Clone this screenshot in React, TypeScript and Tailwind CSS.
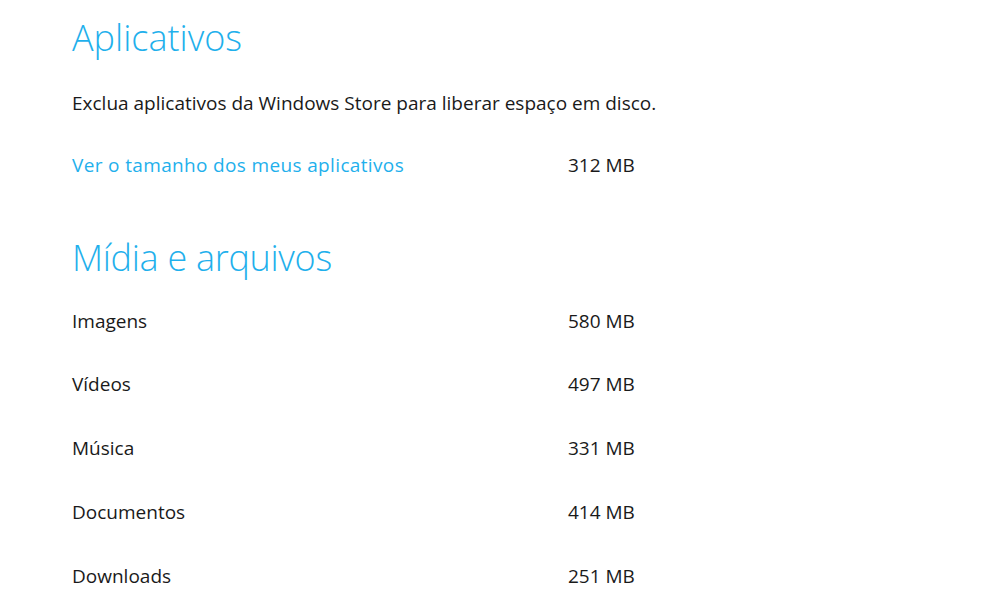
import React from 'react';

const files = [
  { name: 'Imagens', size: '580 MB' },
  { name: 'Vídeos', size: '497 MB' },
  { name: 'Música', size: '331 MB' },
  { name: 'Documentos', size: '414 MB' },
  { name: 'Downloads', size: '251 MB' },
];

export default function App() {
  return (
    <div className="min-h-screen w-full bg-white pl-[72px] text-[#1a1a1a] font-['Open_Sans',sans-serif]">
      <h1 className="mt-[14px] h-[48px] text-[36px] font-light leading-[48px] text-[#1fb0ec]">Aplicativos</h1>
      <p className="mt-[27px] h-[28px] text-[19px] leading-[28px]">
        Exclua aplicativos da Windows Store para liberar espaço em disco.
      </p>
      <div className="mt-[34px] grid h-[28px] grid-cols-[496px_auto] text-[19px] leading-[28px]">
        <a className="tracking-[0.35px] text-[#1fb0ec]">Ver o tamanho dos meus aplicativos</a>
        <span>312 MB</span>
      </div>
      <h2 className="mt-[55px] h-[48px] text-[36px] font-light leading-[48px] tracking-[-0.3px] text-[#1fb0ec]">
        Mídia e arquivos
      </h2>
      <div className="mt-[7px] flex flex-col">
        {files.map((f) => (
          <div key={f.name} className="grid h-[63.75px] grid-cols-[496px_auto] items-center text-[19px]">
            <span>{f.name}</span>
            <span>{f.size}</span>
          </div>
        ))}
      </div>
    </div>
  );
}
